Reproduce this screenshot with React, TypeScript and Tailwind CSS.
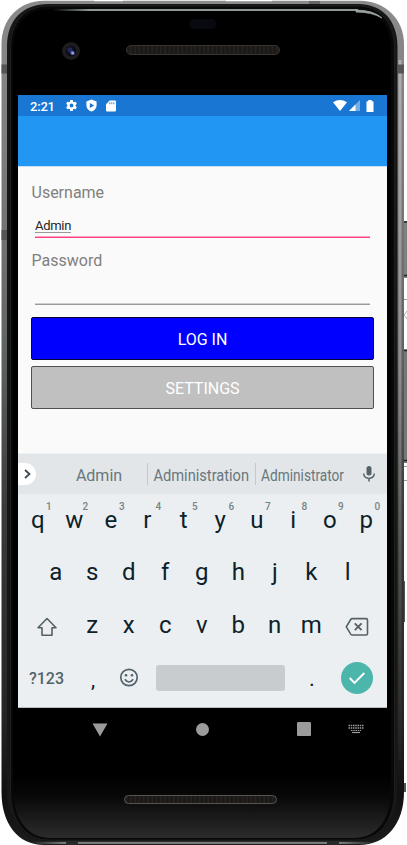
import React from "react";

const rowOne = ["q", "w", "e", "r", "t", "y", "u", "i", "o", "p"];
const rowTwo = ["a", "s", "d", "f", "g", "h", "j", "k", "l"];
const rowThree = ["z", "x", "c", "v", "b", "n", "m"];

function PhoneBody() {
  return (
    <svg className="absolute inset-0" width="407" height="845" viewBox="0 0 407 845" aria-hidden="true">
      <defs>
        <linearGradient id="rim" x1="0" y1="0" x2="0" y2="1">
          <stop offset="0" stopColor="#8b8b8b" />
          <stop offset="0.2" stopColor="#7b7b7b" />
          <stop offset="0.4" stopColor="#626566" />
          <stop offset="0.6" stopColor="#3a3c3c" />
          <stop offset="0.85" stopColor="#242526" />
          <stop offset="0.94" stopColor="#101010" />
          <stop offset="1" stopColor="#1c1c1c" />
        </linearGradient>
        <linearGradient id="rimRight" x1="0" y1="0" x2="0" y2="1">
          <stop offset="0" stopColor="#b0b0b0" />
          <stop offset="0.45" stopColor="#8c8c8c" />
          <stop offset="0.7" stopColor="#555555" />
          <stop offset="1" stopColor="#202020" />
        </linearGradient>
        <linearGradient id="chin" x1="0" y1="0" x2="0" y2="1">
          <stop offset="0" stopColor="#000000" />
          <stop offset="0.35" stopColor="#080808" />
          <stop offset="1" stopColor="#2c2c2c" />
        </linearGradient>
        <linearGradient id="shine" x1="0" y1="0" x2="1" y2="0">
          <stop offset="0" stopColor="#8e9998" stopOpacity="0" />
          <stop offset="0.12" stopColor="#8e9998" />
          <stop offset="1" stopColor="#8e9998" />
        </linearGradient>
        <linearGradient id="foot" x1="0" y1="0" x2="1" y2="0">
          <stop offset="0" stopColor="#7a7a7a" stopOpacity="0" />
          <stop offset="0.1" stopColor="#7a7a7a" />
          <stop offset="0.9" stopColor="#7a7a7a" />
          <stop offset="1" stopColor="#7a7a7a" stopOpacity="0" />
        </linearGradient>
        <pattern id="mesh" width="4.3" height="8" patternUnits="userSpaceOnUse">
          <rect width="4.3" height="8" fill="#1b1917" />
          <rect x="1" y="0" width="1.6" height="8" fill="#25221f" />
        </pattern>
      </defs>
      {/* side buttons */}
      <path d="M402 221h5v57h-5z" fill="#808080" />
      <path d="M404 222h3M403 275.5h4" stroke="#222" strokeWidth="1.5" />
      <path d="M404 299.5h3M404 349.5h3" stroke="#999" />
      <path d="M407 311l-3 4 3 4" stroke="#aaa" fill="none" />
      <path d="M402 350h5v113h-5z" fill="#777" />
      <path d="M404 350.5h3M404 460.5h3" stroke="#222" strokeWidth="1.5" />
      <path d="M404 466.5h3M404 480.5h3" stroke="#999" />
      <path d="M402 581h3v41h-3zM402 783h4v9h-4z" fill="#555" />
      {/* metal rim */}
      <path d="M44 0.8H360C386 1 404 20 404 44V792C404 824 386 845 359 845H44C18 845 1.5 824 1.5 792V44C1.5 20 18 1 44 0.8Z" fill="url(#rim)" />
      <rect x="398.5" y="60" width="3" height="700" fill="url(#rimRight)" />
      <path d="M94 0h29v1.2H94zM226 0h46v1.2H226z" fill="#fff" />
      <path d="M309 1h11v3H309z" fill="#666" />
      <path d="M1.5 64.5h6v9h-6zM1.5 230h6v10h-6zM398 64.5h6v9h-6z" fill="#555" />
      {/* glass edge */}
      <path d="M48 4H358C382 4 397 20 397.500 46V792C397.500 821 382 841 357 841H48C23 841 7 821 7 792V46C7 20 23 4 48 4Z" fill="#171717" />
      <path d="M49 6H357C380 6 394 22 394.500 48V791C394.500 820 380 840 356 840H49C25 840 10.500 820 10.500 791V48C10.500 22 25 6 49 6Z" fill="#080808" stroke="#1e1e1e" />
      <path d="M50 9H355C378 9 391 24 391 50V790C391 818 378 838 354 838H50C27 838 13 818 13 790V50C13 24 27 9 50 9Z" fill="#000" />
      <path d="M13 774H391V790C391 818 378 838 354 838H50C27 838 13 818 13 790Z" fill="url(#chin)" />
      <rect x="53" y="9" width="305" height="2" fill="url(#shine)" />
      <path d="M356 10q17 0 26 8q-10 -6 -26 -6z" fill="#9ba4a3" stroke="#9ba4a3" strokeWidth="0.8" />
      <rect x="30" y="841.8" width="346" height="2.2" fill="url(#foot)" />
      <path d="M66 841h12v4H66zM327 841h12v4h-12z" fill="#292929" />
      {/* sensor, camera and speakers */}
      <rect x="189" y="19" width="27" height="10" rx="5" fill="#090a10" />
      <circle cx="71" cy="51" r="9" fill="#1e1c1c" />
      <circle cx="71" cy="51" r="5.2" fill="#0b0b18" />
      <circle cx="70" cy="50" r="2.7" fill="#20275a" />
      <circle cx="72.5" cy="53" r="2.1" fill="#6570c4" />
      <circle cx="73" cy="53.2" r="0.9" fill="#aeb4eb" />
      <rect x="126.5" y="45.5" width="153" height="9" rx="4.5" fill="url(#mesh)" stroke="#383531" />
      <rect x="124.5" y="795.5" width="152" height="8" rx="4" fill="url(#mesh)" stroke="#56544d" />
    </svg>
  );
}

function StatusBar() {
  return (
    <div className="flex h-[21px] items-center bg-[#1976d2] pl-3 pr-[13px] text-white">
      <span className="w-[35px] pt-[2px] text-[13px] font-medium leading-[20px] tracking-[-0.2px]">2:21</span>
      <svg width="13" height="13" viewBox="0 0 24 24" fill="currentColor">
        <path d="M19.430 12.980c.04-.32.07-.64.07-.98s-.03-.66-.07-.98l2.110-1.650c.19-.15.24-.42.12-.64l-2-3.460c-.12-.22-.39-.3-.61-.22l-2.490 1c-.52-.4-1.080-.73-1.690-.98l-.38-2.650C14.460 2.180 14.250 2 14 2h-4c-.25 0-.46.18-.49.42l-.38 2.650c-.61.25-1.170.59-1.690.98l-2.490-1c-.23-.09-.49 0-.61.22l-2 3.460c-.13.22-.07.49.12.64l2.110 1.650c-.04.32-.07.65-.07.98s.03.66.07.98l-2.110 1.650c-.19.15-.24.42-.12.64l2 3.460c.12.22.39.3.61.22l2.490-1c.52.4 1.080.73 1.690.98l.38 2.650c.03.24.24.42.49.42h4c.25 0 .46-.18.49-.42l.38-2.650c.61-.25 1.170-.59 1.690-.98l2.490 1c.23.09.49 0 .61-.22l2-3.460c.12-.22.07-.49-.12-.64zM12 15.500A3.500 3.500 0 1 1 12 8.500a3.500 3.500 0 0 1 0 7z" />
      </svg>
      <svg width="11" height="13" viewBox="0 0 11 13" className="ml-[7.5px]">
        <path d="M5.5 0.5L10.6 2.4V6.2C10.6 9.3 8.4 11.7 5.5 12.6C2.6 11.7 0.4 9.3 0.4 6.2V2.4Z" fill="#fff" />
        <path d="M3.800 4.100V9L8.200 6.550Z" fill="#1976d2" />
      </svg>
      <svg width="10" height="12" viewBox="0 0 10 12" className="ml-[9.5px]">
        <path d="M3.7 0.5H9Q10 0.5 10 1.5V10.5Q10 11.5 9 11.5H1Q0 11.5 0 10.5V4.2Z" fill="#fff" />
        <path d="M3.800 2.200V4.200M5.800 2.200V4.200M7.800 2.200V4.200" stroke="#1976d2" strokeWidth="0.8" />
      </svg>
      <div className="ml-auto flex items-center">
        <svg width="14" height="11" viewBox="0 0 14 11">
          <path d="M0 2.2Q7 -2 14 2.2L7 11Z" fill="#fff" />
        </svg>
        <svg width="11" height="11" viewBox="0 0 11 11" className="ml-[2px]">
          <path d="M0 11L11 0V11Z" fill="#75ade4" />
          <path d="M0 11L6.5 4.5V11Z" fill="#fff" />
        </svg>
        <svg width="8" height="12" viewBox="0 0 8 12" className="ml-[6px]">
          <path d="M2.3 0H5.7V1.2H7Q7.5 1.2 7.5 1.8V11.4Q7.5 12 7 12H1Q0.5 12 0.5 11.4V1.8Q0.5 1.2 1 1.2H2.3Z" fill="#fff" />
        </svg>
      </div>
    </div>
  );
}

function LoginForm() {
  return (
    <main className="flex h-[287px] flex-col border-t border-[#c9def0] bg-[#fafafa] px-[13px] pt-[14px]">
      <label className="h-[21px] pl-[0.5px] pt-[0.5px] text-base leading-[21px] text-[#808080]">Username</label>
      <div className="mx-1 mt-[14px] h-[20px] text-[13px] leading-[20px] text-[#262626]">
        <span className="inline-block h-[17px] border-b border-[#999] leading-[20px] tracking-[-0.3px]">Admin</span>
      </div>
      <div className="mx-1 h-[2px] shrink-0 border-b border-[#ff4081] bg-[#ffa3c2]" />
      <label className="mt-[11px] h-[21px] pl-[0.5px] pt-px text-base leading-[21px] text-[#808080]">Password</label>
      <div className="mx-1 mt-[33px] h-[2px] shrink-0 border-b border-[#9a9a9a] bg-[#cfcfcf]" />
      <button className="mt-[12px] h-[43px] shrink-0 rounded-[2px] border border-[#050533] bg-[#0000ff] pt-[2px] text-base leading-5 text-white">LOG IN</button>
      <button className="mt-[6px] h-[43px] shrink-0 rounded-[2px] border border-[#505050] bg-[#c0c0c0] pt-[2px] text-base leading-5 text-white">SETTINGS</button>
    </main>
  );
}

function Suggestions() {
  return (
    <div className="flex h-[41px] items-center border-t border-[#edf0f1] bg-[#e2e6e9] text-base text-[#69767b]">
      <div className="flex h-[22px] w-[18px] items-center justify-center rounded-r-full bg-white">
        <svg width="9" height="10" viewBox="0 0 9 10"><path d="M2 1L6.5 5L2 9" fill="none" stroke="#37474f" strokeWidth="1.700" /></svg>
      </div>
      <div className="ml-[15px] flex w-[96px] justify-center pt-[3px]"><span>Admin</span></div>
      <div className="h-[22px] w-px bg-[#c3c9cc]" />
      <div className="flex w-[107px] justify-center pt-[3px]"><span className="inline-block scale-x-[0.915]">Administration</span></div>
      <div className="h-[22px] w-px bg-[#c3c9cc]" />
      <div className="flex w-[94px] justify-center pt-[3px]"><span className="inline-block scale-x-[0.855]">Administrator</span></div>
      <svg width="14" height="18" viewBox="0 0 14 18" className="ml-[12px]">
        <rect x="4.5" y="1" width="5" height="9.5" rx="2.5" fill="#546268" />
        <path d="M1.7 8.5C1.7 15 12.3 15 12.3 8.5M7 13V16.5" fill="none" stroke="#546268" strokeWidth="1.500" />
      </svg>
    </div>
  );
}

function Letter({ value, hint }: { value: string; hint?: string }) {
  return (
    <div className="relative flex w-[36.5px] shrink-0 items-center justify-center text-[24px] leading-none text-[#0c2129]">
      {value}
      {hint && <span className="absolute left-[26.5px] top-[7px] text-[10px] font-medium leading-[12px] text-[#778388]">{hint}</span>}
    </div>
  );
}

function Keyboard() {
  return (
    <div className="h-[255px] border-b border-[#b4bfbd] bg-[#eceff1]">
      <Suggestions />
      <div className="flex h-[52px] pl-[1.5px]">
        {rowOne.map((key, index) => <Letter key={key} value={key} hint={String((index + 1) % 10)} />)}
      </div>
      <div className="flex h-[52px] pl-[19.5px]">
        {rowTwo.map((key) => <Letter key={key} value={key} />)}
      </div>
      <div className="flex h-[54px]">
        <div className="flex w-[56px] shrink-0 items-center justify-center">
          <svg width="22" height="20" viewBox="0 0 22 20" className="ml-px mt-[3px]"><path d="M11 1.5L20 10.8H16V18.3H6V10.8H2Z" fill="none" stroke="#546268" strokeWidth="1.600" strokeLinejoin="round" /></svg>
        </div>
        {rowThree.map((key) => <Letter key={key} value={key} />)}
        <div className="flex w-[55px] items-center justify-center">
          <svg width="24" height="20" viewBox="0 0 24 20" className="mt-[3px]">
            <path d="M7.2 1.6H21.2Q22.5 1.6 22.5 2.9V16.7Q22.5 18 21.2 18H7.2Q6.3 18 5.7 17.1L1.3 9.8L5.7 2.5Q6.3 1.6 7.2 1.6Z" fill="none" stroke="#546268" strokeWidth="1.600" />
            <path d="M9.800 6.400L16.600 13.200M16.600 6.400L9.800 13.200" fill="none" stroke="#546268" strokeWidth="1.900" />
          </svg>
        </div>
      </div>
      <div className="flex h-[52px] items-center text-[#53636b]">
        <span className="w-[57px] pt-px text-center text-base font-medium leading-5">?123</span>
        <span className="w-[36px] pt-[4px] text-center text-[21px] leading-6 text-[#0c2129]">,</span>
        <svg width="20" height="20" viewBox="0 0 20 20" className="ml-[8px]">
          <circle cx="10" cy="9.5" r="8.2" fill="none" stroke="#53636b" strokeWidth="1.700" />
          <circle cx="7" cy="7.300" r="1.300" fill="#53636b" /><circle cx="13" cy="7.300" r="1.300" fill="#53636b" />
          <path d="M5.8 11.3Q10 16.8 14.2 11.3" fill="none" stroke="#53636b" strokeWidth="1.600" />
        </svg>
        <div className="ml-[17px] h-[26px] w-[129px] rounded-[3px] bg-[#c8ccce]" />
        <span className="w-[54px] pt-[2px] text-center text-[22px] leading-6 text-[#0c2129]">.</span>
        <div className="ml-[2px] flex size-8 items-center justify-center rounded-full bg-[#4db6ac]">
          <svg width="18" height="14" viewBox="0 0 18 14"><path d="M1.7 7L6.5 11.8L16.3 2" fill="none" stroke="#fff" strokeWidth="1.900" /></svg>
        </div>
      </div>
    </div>
  );
}

function NavigationBar() {
  return (
    <nav className="flex h-[42px] items-center bg-black text-[#9b9b9b]">
      <svg width="16" height="14" viewBox="0 0 16 14" className="ml-[74px] mt-[2px]"><path d="M0.5 0.5H15.5L8 13.5Z" fill="currentColor" /></svg>
      <div className="ml-[87.5px] size-[13px] rounded-full bg-[#9b9b9b]" />
      <div className="ml-[88.5px] size-[14px] rounded-[1px] bg-[#9b9b9b]" />
      <svg width="16" height="10" viewBox="0 0 16 10" className="ml-[36.5px]">
        <path d="M0.500 1.500H15.500M0.500 4H15.500" stroke="currentColor" strokeWidth="1.400" strokeDasharray="1.500 0.750" />
        <path d="M3 6.500H13" stroke="currentColor" strokeDasharray="1.500 0.750" />
        <path d="M4 8.500H12" stroke="currentColor" strokeWidth="1.200" />
      </svg>
    </nav>
  );
}

export default function App() {
  return (
    <div className="relative h-[845px] w-[407px] overflow-hidden bg-white font-[Roboto,sans-serif]">
      <PhoneBody />
      <div className="relative pl-[18px] pt-[95px]">
        <div className="w-[369px] overflow-hidden">
          <StatusBar />
          <header className="h-[50px] bg-[#2196f3]" />
          <LoginForm />
          <Keyboard />
          <NavigationBar />
        </div>
      </div>
    </div>
  );
}
